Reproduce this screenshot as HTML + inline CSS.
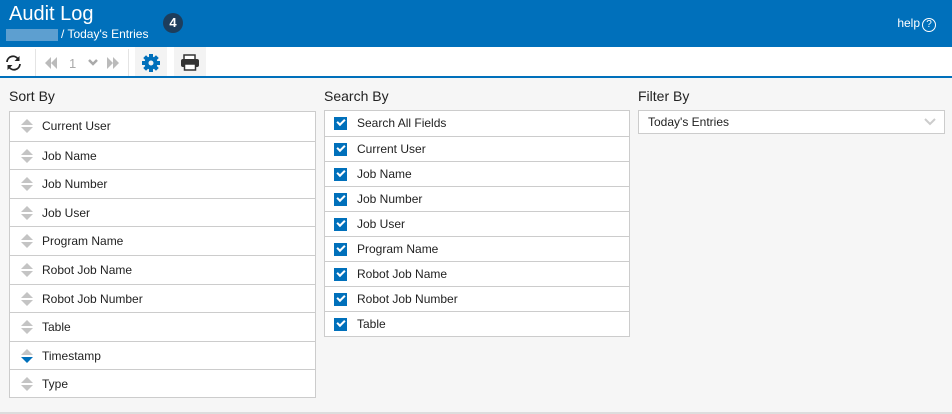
<!DOCTYPE html>
<html><head><style>
*{box-sizing:border-box;margin:0;padding:0}
body{width:952px;height:414px;overflow:hidden;background:#f6f6f6;font-family:"Liberation Sans",sans-serif;position:relative;color:#222}
.hdr{position:absolute;left:0;top:0;width:952px;height:47px;background:#0070bb;color:#fff}
.t{position:absolute;left:9px;top:3px;font-size:20px}
.bc{position:absolute;left:61px;top:27px;font-size:12px}
.blur{position:absolute;left:6px;top:29px;width:52px;height:12px;background:#5d9fd0}
.badge{position:absolute;left:163px;top:13px;width:20px;height:20px;border-radius:50%;background:#1d3d5c;font-size:13px;font-weight:bold;text-align:center;line-height:20px}
.help{position:absolute;right:16px;top:16px;font-size:12px}
.help span{display:inline-block;width:14px;height:14px;border:1px solid #fff;border-radius:50%;text-align:center;line-height:12px;font-size:10px;margin-left:2px}
.tb{position:absolute;left:0;top:47px;width:952px;height:31px;background:#fff;border-bottom:2px solid #0070bb}
.btn{position:absolute;top:0;height:29px;background:#f3f3f3}
h3{position:absolute;font-weight:normal;font-size:14px;top:88px}
.list{position:absolute;background:#fff;border:1px solid #ccc}
.row{border-top:1px solid #ccc;font-size:12px;position:relative;padding-left:32px}
.row:first-child{border-top:none}
.s .row{height:28.6px;line-height:28px}
.q .row{height:25px;line-height:24px}
.arr{position:absolute;left:11px;top:7px;width:12px;height:14px}
.arr:before,.arr:after{content:"";position:absolute;left:0;border-left:6px solid transparent;border-right:6px solid transparent}
.arr:before{top:0;border-bottom:6px solid #c4c4c4}
.arr:after{top:8px;border-top:6px solid #c4c4c4}
.arr.d:after{border-top-color:#0070bb}
.cb{position:absolute;left:9px;top:6px;width:13px;height:13px;background:#0070bb}
.cb:after{content:"";position:absolute;left:3px;top:2px;width:6px;height:3px;border-left:2px solid #fff;border-bottom:2px solid #fff;transform:rotate(-45deg)}
</style></head><body>
<div class="hdr"><div class="t">Audit Log</div><div class="blur"></div><div class="bc">/ Today's Entries</div><div class="badge">4</div><div class="help">help<span>?</span></div></div>
<div class="tb">
<div class="btn" style="left:0;width:28px;background:#fff"><svg width="28" height="31"><path d="M7 15a6 6 0 0 1 11-3M20 17a6 6 0 0 1-11 3" stroke="#222" stroke-width="1.8" fill="none"/><path d="M19.5 9v5h-5z M7.5 23v-5h5z" fill="#222"/></svg></div>
<div style="position:absolute;left:35px;top:2px;width:1px;height:27px;background:#e4e4e4"></div>
<div class="btn" style="left:36px;width:92px;background:#fff"><svg width="92" height="31"><path d="M15 10l-6 6 6 6zM21 10l-6 6 6 6z" fill="#bbb"/><text x="33" y="21" font-size="13" fill="#aaa" font-family="Liberation Sans">1</text><path d="M53 13l4 4 4-4" stroke="#aaa" stroke-width="2.5" fill="none"/><path d="M71 10l6 6-6 6zM77 10l6 6-6 6z" fill="#bbb"/></svg></div>
<div style="position:absolute;left:128px;top:2px;width:1px;height:27px;background:#e4e4e4"></div>
<div class="btn" style="left:135px;width:32px"><svg width="32" height="31"><g fill="#0070bb" transform="translate(16 16)"><rect x="-2" y="-9" width="4" height="18"/><rect x="-2" y="-9" width="4" height="18" transform="rotate(45)"/><rect x="-2" y="-9" width="4" height="18" transform="rotate(90)"/><rect x="-2" y="-9" width="4" height="18" transform="rotate(135)"/><circle r="6.5"/><circle r="2.5" fill="#f3f3f3"/></g></svg></div>
<div class="btn" style="left:174px;width:32px"><svg width="32" height="31"><rect x="10" y="8" width="11" height="5" fill="#fff" stroke="#333" stroke-width="1.5"/><rect x="7" y="12" width="18" height="8" rx="2" fill="#333"/><rect x="10.5" y="17" width="11" height="6" fill="#fff" stroke="#333" stroke-width="1.5"/></svg></div>
</div>
<h3 style="left:9px">Sort By</h3>
<h3 style="left:324px">Search By</h3>
<h3 style="left:638px">Filter By</h3>
<div class="list s" style="left:9px;top:111px;width:307px;height:287px">
<div class="row"><i class="arr"></i>Current User</div>
<div class="row"><i class="arr"></i>Job Name</div>
<div class="row"><i class="arr"></i>Job Number</div>
<div class="row"><i class="arr"></i>Job User</div>
<div class="row"><i class="arr"></i>Program Name</div>
<div class="row"><i class="arr"></i>Robot Job Name</div>
<div class="row"><i class="arr"></i>Robot Job Number</div>
<div class="row"><i class="arr"></i>Table</div>
<div class="row"><i class="arr d"></i>Timestamp</div>
<div class="row"><i class="arr"></i>Type</div>
</div>
<div class="list q" style="left:324px;top:110px;width:306px;height:227px">
<div class="row"><i class="cb"></i>Search All Fields</div>
<div class="row"><i class="cb"></i>Current User</div>
<div class="row"><i class="cb"></i>Job Name</div>
<div class="row"><i class="cb"></i>Job Number</div>
<div class="row"><i class="cb"></i>Job User</div>
<div class="row"><i class="cb"></i>Program Name</div>
<div class="row"><i class="cb"></i>Robot Job Name</div>
<div class="row"><i class="cb"></i>Robot Job Number</div>
<div class="row"><i class="cb"></i>Table</div>
</div>
<div class="list" style="left:638px;top:110px;width:307px;height:24px;font-size:12px;line-height:22px;padding-left:9px">Today's Entries<svg style="position:absolute;right:8px;top:7px" width="12" height="8"><path d="M1 1l5 5 5-5" stroke="#ccc" stroke-width="2" fill="none"/></svg></div>
<div style="position:absolute;left:0;top:412px;width:952px;height:2px;background:#ddd"></div>
</body></html>
